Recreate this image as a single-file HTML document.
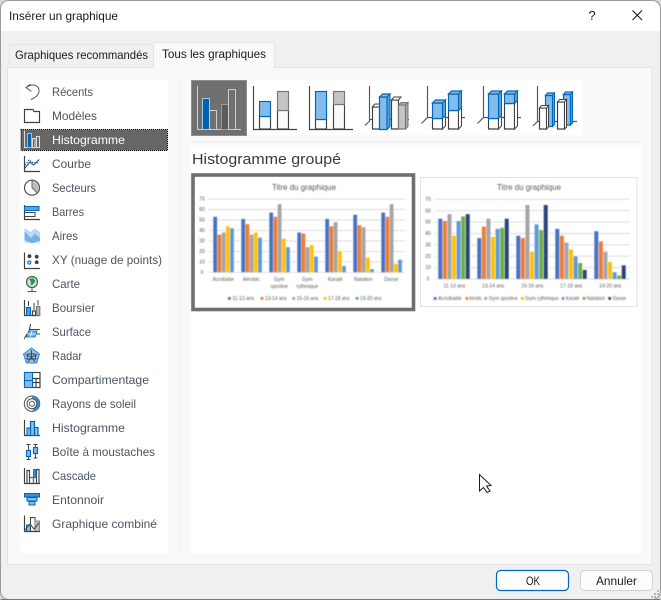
<!DOCTYPE html>
<html lang="fr">
<head>
<meta charset="utf-8">
<title>Insérer un graphique</title>
<style>
html,body{margin:0;padding:0;width:661px;height:600px;overflow:hidden;background:#d9d9d9}
svg{display:block;position:absolute;left:0;top:0}
text{font-family:"Liberation Sans",sans-serif}
.s{font-size:12px;fill:#4c5560}
.d{fill:none;stroke:#404040;stroke-width:1.15}
.b{fill:#83bcea;stroke:#0067b8;stroke-width:1.15}
.w{fill:#fafafa;stroke:#404040;stroke-width:1.15}
.g{fill:#c4c4c0;stroke:#777;stroke-width:1.15}
.t{fill:#eef6fc;stroke:#0067b8;stroke-width:1}
.wt{fill:#fff;stroke:#404040;stroke-width:1}
.c1{fill:#4472c4}.c2{fill:#ed7d31}.c3{fill:#a5a5a5}.c4{fill:#ffc000}.c5{fill:#5b9bd5}.c6{fill:#70ad47}.c7{fill:#264478}
.ax{font-size:5px;fill:#595959}
.lg{font-size:5px;fill:#595959}
.ti{font-size:8px;fill:#595959}
.gl{stroke:#d9d9d9;stroke-width:.9}
</style>
</head>
<body>
<svg width="661" height="600" viewBox="0 0 661 600" xmlns="http://www.w3.org/2000/svg">
<defs><filter id="bl" x="-2%" y="-2%" width="104%" height="104%"><feGaussianBlur stdDeviation="0.4"/></filter></defs>

<!-- window -->
<rect x="0.5" y="0.5" width="660" height="599" rx="8" fill="#f0f0f0" stroke="#9a9a9a"/>
<path d="M1 31 V9 A8 8 0 0 1 9 1 H652 A8 8 0 0 1 660 9 V31 Z" fill="#fff"/>
<path d="M0.5 599.5 H660.5" stroke="#777"/>
<text x="9" y="20" font-size="12" fill="#1a1a1a" textLength="109" lengthAdjust="spacingAndGlyphs">Insérer un graphique</text>
<text x="592" y="20" font-size="13" fill="#1a1a1a" text-anchor="middle">?</text>
<path d="M632.5 10.5 L642 20 M642 10.5 L632.5 20" stroke="#1a1a1a" stroke-width="1.1" fill="none"/>

<!-- tabs and panel -->
<rect x="7.5" y="67.5" width="644.5" height="497" fill="#f9f9f9" stroke="#e3e3e3"/>
<path d="M153.5 67.5 V42.5 H274.5 V67.5" fill="#f9f9f9" stroke="#e3e3e3"/>
<rect x="154" y="64" width="120" height="5" fill="#f9f9f9"/>
<path d="M9.5 67 V44.5 H153" fill="#f0f0f0" stroke="#e6e6e6"/>
<text x="15" y="59" font-size="12" fill="#1a1a1a" textLength="133" lengthAdjust="spacingAndGlyphs">Graphiques recommandés</text>
<text x="162" y="58" font-size="12" fill="#1a1a1a" textLength="104" lengthAdjust="spacingAndGlyphs">Tous les graphiques</text>

<!-- sidebar -->
<rect x="20" y="80" width="148" height="473" fill="#fff"/>
<path d="M179.5 80 V553" stroke="#efefef"/>
<rect x="21" y="129.5" width="146.5" height="21" fill="#666" stroke="#000" stroke-dasharray="1 1"/>

<text class="s" x="52" y="96" textLength="41" lengthAdjust="spacingAndGlyphs">Récents</text>
<text class="s" x="52" y="120" textLength="45" lengthAdjust="spacingAndGlyphs">Modèles</text>
<text class="s" x="52" y="144" style="fill:#fff" textLength="73" lengthAdjust="spacingAndGlyphs">Histogramme</text>
<text class="s" x="52" y="168" textLength="39" lengthAdjust="spacingAndGlyphs">Courbe</text>
<text class="s" x="52" y="192" textLength="44" lengthAdjust="spacingAndGlyphs">Secteurs</text>
<text class="s" x="52" y="216" textLength="32" lengthAdjust="spacingAndGlyphs">Barres</text>
<text class="s" x="52" y="240" textLength="26" lengthAdjust="spacingAndGlyphs">Aires</text>
<text class="s" x="52" y="264" textLength="110" lengthAdjust="spacingAndGlyphs">XY (nuage de points)</text>
<text class="s" x="52" y="288" textLength="28" lengthAdjust="spacingAndGlyphs">Carte</text>
<text class="s" x="52" y="312" textLength="43" lengthAdjust="spacingAndGlyphs">Boursier</text>
<text class="s" x="52" y="336" textLength="39" lengthAdjust="spacingAndGlyphs">Surface</text>
<text class="s" x="52" y="360" textLength="30" lengthAdjust="spacingAndGlyphs">Radar</text>
<text class="s" x="52" y="384" textLength="97" lengthAdjust="spacingAndGlyphs">Compartimentage</text>
<text class="s" x="52" y="408" textLength="84" lengthAdjust="spacingAndGlyphs">Rayons de soleil</text>
<text class="s" x="52" y="432" textLength="73" lengthAdjust="spacingAndGlyphs">Histogramme</text>
<text class="s" x="52" y="456" textLength="103" lengthAdjust="spacingAndGlyphs">Boîte à moustaches</text>
<text class="s" x="52" y="480" textLength="44" lengthAdjust="spacingAndGlyphs">Cascade</text>
<text class="s" x="52" y="504" textLength="52" lengthAdjust="spacingAndGlyphs">Entonnoir</text>
<text class="s" x="52" y="528" textLength="105" lengthAdjust="spacingAndGlyphs">Graphique combiné</text>

<!-- sidebar icons -->
<path d="M26 87.5 C33 83 39 85 39 91 C39 95 35 98 31 99.5 M30.5 84 L26 87.5 L31.5 91.5" fill="none" stroke="#555" stroke-width="1"/>
<path d="M24.5 122.5 V109.5 H33 L34 111.5 H39.5 V122.5 Z" class="d"/>
<path d="M24.5 130.5 V147.5 H40 M32.5 147 V138.5 H35 V147 M36.5 147 V136.5 H39.5 V147" fill="none" stroke="#ddd"/>
<rect x="27.5" y="133.5" width="4" height="14" fill="#0067b8" stroke="#8fc0ea"/>
<path d="M24.5 156 V171.5 H40" class="d"/>
<path d="M25 168 L30 162 L33.5 165 L39.3 159.5" fill="none" stroke="#0067b8" stroke-width="1.2"/>
<path d="M25 165 L29 160 L33 162.5 L39 163" fill="none" stroke="#404040" stroke-dasharray="1.5 1"/>
<circle cx="32" cy="187.7" r="7.5" fill="#fff" stroke="#505050" stroke-width="1.2"/>
<path d="M32 187.7 V180.2 A7.5 7.5 0 0 1 37.3 193 Z" fill="#bdbdbd" stroke="#505050" stroke-width=".8"/>
<path d="M24.5 205 V219.5 H40" class="d"/>
<rect x="24.5" y="206.5" width="14.5" height="4" fill="#52a5ea" stroke="#0067b8"/>
<rect x="24.5" y="212.5" width="10.5" height="4" fill="#fff" stroke="#404040"/>
<path d="M24.5 228 L30.5 232 L35 228.5 L40 232 V243 H24.5 Z" fill="#bcd8f0"/>
<path d="M24.5 231.5 L31 238 L35 234 L40 238 V243 H24.5 Z" fill="#6fb2ea"/>
<path d="M24.5 240 L31 243 H24.5 Z M33 243 L40 240.5 V243 Z" fill="#c8e0f4"/>
<path d="M24.5 252.5 V268.5 H40" class="d"/>
<circle cx="29.5" cy="256.2" r="1.9" fill="#404040"/>
<circle cx="36.7" cy="256.7" r="1.9" fill="#404040"/>
<circle cx="29.3" cy="262.5" r="1.6" fill="#cfe6f8" stroke="#0067b8"/>
<circle cx="36.7" cy="262.3" r="1.9" fill="#404040"/>
<circle cx="32" cy="282" r="5.5" fill="#cfe6d5" stroke="#555" stroke-width="1.2"/>
<path d="M29 279 L33 278 L35.5 281 L33 284.5 L30.5 285 L31 282 Z" fill="#1f9a4d"/>
<path d="M32 288 V291.5 M27.5 291.5 H36.5" stroke="#555" stroke-width="1" fill="none"/>
<path d="M24.5 300 V315.5 H40" class="d"/>
<rect x="26.5" y="307.5" width="4" height="8" class="b" style="fill:#4ba0e6"/>
<rect x="32.5" y="311" width="3" height="4.5" class="w"/>
<rect x="36.5" y="306.5" width="3.3" height="9" class="g" style="fill:#b5b5b5"/>
<path d="M28.5 301 V306 M34 303 V310 M38 300 V305" stroke="#404040" fill="none"/>
<path d="M30.5 324 L29 332 M24 339 L27 334 M30 329.5 H40 M28.5 334 H40" stroke="#404040" fill="none"/>
<path d="M28.5 331 H37 L35 337 H26.5 Z" fill="#6fb2ea" stroke="#0067b8" stroke-width=".8"/>
<path d="M32 331 L30.5 337 M27.5 334 H36" stroke="#fff" stroke-width=".7" fill="none"/>
<path d="M31.5 348 L39.5 354 L36.5 363 H26.5 L23.5 354 Z" fill="#8fc4ee" stroke="#2a85d0"/>
<path d="M31.5 350 V359 M25.5 354.5 L31.5 357 L37.5 354.5 M28 362 L31.5 357 L35 362 M28 354 H35 L36 359 H27 Z" fill="none" stroke="#404040" stroke-width=".9"/>
<rect x="24.5" y="372.5" width="15.5" height="15" class="d"/>
<path d="M32.5 378.5 H40 M36 378.5 V388 M32.5 382.5 H40" class="d"/>
<rect x="24.5" y="372.5" width="8" height="15" fill="#83bcea" stroke="#0067b8"/>
<path d="M24.5 380.5 H32.5" stroke="#0067b8"/>
<circle cx="32" cy="403.7" r="7.7" fill="#fff" stroke="#505050"/>
<path d="M32 396 A7.7 7.7 0 0 1 33 411.3 L32.5 408.5 A5 5 0 0 0 32 398.7 Z" fill="#3390e0"/>
<circle cx="32" cy="403.7" r="5" fill="none" stroke="#505050"/>
<circle cx="32" cy="403.7" r="2.5" fill="none" stroke="#505050"/>
<path d="M24.5 420 V435.5 H40" class="d"/>
<rect x="27" y="428" width="3.5" height="7.5" class="b"/>
<rect x="30.5" y="421.5" width="4" height="14" class="b"/>
<rect x="34.5" y="427.5" width="3.5" height="8" class="b"/>
<rect x="26.5" y="450.5" width="4" height="6" class="b"/>
<rect x="33.5" y="447.5" width="4" height="6" class="b"/>
<path d="M28.5 444.5 V450 M28.5 457 V459.5 M26.5 444.5 H30.5 M26.5 459.5 H30.5 M35.5 444.5 V447 M35.5 454 V458 M33.5 444.5 H37.5 M33.5 458 H37.5" stroke="#404040" stroke-width=".9" fill="none"/>
<path d="M24.5 468 V483.5 H40 M27 483 V470.5 H29.5 V483 M36.5 483 V469.5 H39 V483" class="d"/>
<path d="M30 477.5 H33.5 V483" fill="none" stroke="#777" stroke-width="1.5"/>
<rect x="33.5" y="469.5" width="2.6" height="8" fill="#3390e0" stroke="#0067b8" stroke-width=".8"/>
<rect x="24.5" y="493.5" width="15" height="3.5" fill="#3390e0" stroke="#0067b8"/>
<rect x="27" y="497.5" width="10" height="3.5" fill="#83bcea" stroke="#0067b8"/>
<rect x="29" y="501.5" width="6" height="3.5" fill="#83bcea" stroke="#0067b8"/>
<rect x="26.5" y="525" width="4" height="6.5" fill="#83bcea" stroke="#0067b8"/>
<rect x="30.5" y="517.5" width="4.5" height="14" fill="#fafafa" stroke="#404040"/>
<rect x="35" y="521" width="4.5" height="10.5" fill="#bdbdbd" stroke="#888"/>
<path d="M24.5 515.5 V531.5 H40" class="d"/>
<path d="M25 530 L30 524 L34 529 L39 523" fill="none" stroke="#505050" stroke-width="1.1"/>

<!-- main white area -->
<rect x="191" y="80" width="392" height="55" fill="#fff"/>
<path d="M192 141.5 H640" stroke="#efefef"/>
<rect x="191" y="145" width="450" height="408" fill="#fff"/>
<text x="192" y="164" font-size="14.7" fill="#3a3a3a" textLength="149" lengthAdjust="spacingAndGlyphs">Histogramme groupé</text>

<!-- gallery 1 selected -->
<rect x="191.5" y="80.5" width="55" height="55" fill="#707070" stroke="#8e8e8e"/>
<path d="M197.5 86 V129.5 H241" fill="none" stroke="#cfcfcf"/>
<rect x="202.5" y="98.5" width="7" height="31" fill="#0063b1" stroke="#a8cbea"/>
<rect x="209.5" y="110.5" width="7" height="19" fill="none" stroke="#cfcfcf"/>
<rect x="221.5" y="104.5" width="7" height="25" fill="#5c5c5c" stroke="#9a9a9a"/>
<rect x="228.5" y="89.5" width="7" height="40" fill="none" stroke="#cfcfcf"/>

<!-- gallery 2 stacked -->
<rect x="259.5" y="116.5" width="11" height="12.5" class="w"/>
<rect x="259.5" y="101.5" width="11" height="15" class="b"/>
<rect x="277.5" y="110.5" width="11" height="18.5" class="w"/>
<rect x="277.5" y="91.5" width="11" height="19" class="g"/>
<path d="M253.5 86 V129.5 H297" class="d"/>

<!-- gallery 3 100% -->
<rect x="315.5" y="119.5" width="11" height="9.5" class="w"/>
<rect x="315.5" y="91.5" width="11" height="28" class="b"/>
<rect x="333.5" y="104.5" width="11" height="24.5" class="w"/>
<rect x="333.5" y="91.5" width="11" height="13" class="g"/>
<path d="M309.5 86 V129.5 H353" class="d"/>

<!-- gallery 4 3D grouped -->
<path d="M369.5 86 V121 L365 125.5 M369.5 119.5 H409" class="d" style="stroke:#555"/>
<path d="M372.5 107 V129 H379.5 V107 Z" class="w"/>
<path d="M372.5 107 L375 104 H382 L379.5 107 Z" class="wt"/>
<path d="M379.5 97 H387 V129.5 H379.5 Z" class="b"/>
<path d="M379.5 97 L382.5 94 H390 L387 97 Z" class="b"/>
<path d="M387 97 L390 94 V126.5 L387 129.5 Z" fill="#4ba0e6" stroke="#0067b8" stroke-width="1"/>
<path d="M391.5 100 V129 H398.5 V100 Z" class="w"/>
<path d="M391.5 100 L394 97 H401 L398.5 100 Z" class="wt"/>
<path d="M398.5 105 H405.5 V129 H398.5 Z" class="g"/>
<path d="M398.5 105 L401 102.5 H408 L405.5 105 Z M405.5 105 L408 102.5 V126.5 L405.5 129 Z" fill="#aaa" stroke="#777" stroke-width="1"/>

<!-- gallery 5 3D stacked -->
<path d="M427.5 86 V117.5 L421.5 123.5 M427.5 117.5 H465" class="d" style="stroke:#555"/>
<path d="M432.5 118.5 H442.5 V129 H432.5 Z" class="w"/>
<path d="M442.5 118.5 L445.5 115.5 V126 L442.5 129 Z" class="wt"/>
<path d="M432.5 103 H442.5 V118.5 H432.5 Z" class="b"/>
<path d="M432.5 103 L435.5 100 H445.5 L442.5 103 Z" class="b"/>
<path d="M442.5 103 L445.5 100 V115.5 L442.5 118.5 Z" fill="#4ba0e6" stroke="#0067b8" stroke-width="1"/>
<path d="M448.5 110.5 H458.5 V129 H448.5 Z" class="w"/>
<path d="M458.5 110.5 L461.5 107.5 V126 L458.5 129 Z" class="wt"/>
<path d="M448.5 94 H458.5 V110.5 H448.5 Z" class="b"/>
<path d="M448.5 94 L451.5 91 H461.5 L458.5 94 Z" class="b"/>
<path d="M458.5 94 L461.5 91 V107.5 L458.5 110.5 Z" fill="#4ba0e6" stroke="#0067b8" stroke-width="1"/>

<!-- gallery 6 3D 100% -->
<path d="M483.5 86 V117.5 L477.5 123.5 M483.5 117.5 H521" class="d" style="stroke:#555"/>
<path d="M488.5 118.5 H498.5 V129 H488.5 Z" class="w"/>
<path d="M498.5 118.5 L501.5 115.5 V126 L498.5 129 Z" class="wt"/>
<path d="M488.5 94 H498.5 V118.5 H488.5 Z" class="b"/>
<path d="M488.5 94 L491.5 91 H501.5 L498.5 94 Z" class="b"/>
<path d="M498.5 94 L501.5 91 V115.5 L498.5 118.5 Z" fill="#4ba0e6" stroke="#0067b8" stroke-width="1"/>
<path d="M504.5 103.5 H514.5 V129 H504.5 Z" class="w"/>
<path d="M514.5 103.5 L517.5 100.5 V126 L514.5 129 Z" class="wt"/>
<path d="M504.5 94 H514.5 V103.5 H504.5 Z" class="b"/>
<path d="M504.5 94 L507.5 91 H517.5 L514.5 94 Z" class="b"/>
<path d="M514.5 94 L517.5 91 V100.5 L514.5 103.5 Z" fill="#4ba0e6" stroke="#0067b8" stroke-width="1"/>

<!-- gallery 7 3D columns -->
<path d="M537.5 86 V121.5 L533 126 M537.5 121.5 H577" class="d" style="stroke:#555"/>
<path d="M545.5 95.5 H552.5 V126.5 H545.5 Z" class="b"/>
<path d="M545.5 95.5 L547.5 93 H554.5 L552.5 95.5 Z" class="b"/>
<path d="M552.5 95.5 L554.5 93 V124.5 L552.5 126.5 Z" fill="#4ba0e6" stroke="#0067b8" stroke-width="1"/>
<path d="M563.5 94.5 H570.5 V125 H563.5 Z" class="b"/>
<path d="M563.5 94.5 L565.5 92 H572.5 L570.5 94.5 Z" class="b"/>
<path d="M570.5 94.5 L572.5 92 V123 L570.5 125 Z" fill="#4ba0e6" stroke="#0067b8" stroke-width="1"/>
<path d="M539.5 108 H546.5 V129 H539.5 Z" class="w" style="fill:#fff"/>
<path d="M539.5 108 L541.5 105.5 H548.5 L546.5 108 Z M546.5 108 L548.5 105.5 V127 L546.5 129 Z" class="wt"/>
<path d="M557.5 102 H564.5 V129 H557.5 Z" class="w" style="fill:#fff"/>
<path d="M557.5 102 L559.5 99.5 H566.5 L564.5 102 Z M564.5 102 L566.5 99.5 V127 L564.5 129 Z" class="wt"/>

<!-- chart 1 -->
<rect x="193" y="175" width="220.5" height="134.5" fill="#fff" stroke="#6f6f6f" stroke-width="3.6"/>
<g filter="url(#bl)">
<text class="ti" x="304" y="190" text-anchor="middle" textLength="64" lengthAdjust="spacingAndGlyphs">Titre du graphique</text>
<path class="gl" d="M208.7 199H404.7M208.7 209.5H404.7M208.7 220H404.7M208.7 230.4H404.7M208.7 240.9H404.7M208.7 251.4H404.7M208.7 261.8H404.7M208.7 272.3H404.7"/>
<g class="ax" text-anchor="middle">
<text x="202" y="200.6">70</text><text x="202" y="211.1">60</text><text x="202" y="221.6">50</text><text x="202" y="232">40</text><text x="202" y="242.5">30</text><text x="202" y="253">20</text><text x="202" y="263.4">10</text><text x="202" y="273.9">0</text>
<text x="223.3" y="281">Acrobatie</text><text x="251.3" y="281">Aérobic</text><text x="279.3" y="281">Gym</text><text x="279.3" y="288">sportive</text><text x="307.3" y="281">Gym</text><text x="307.3" y="288">rythmique</text><text x="335.3" y="281">Karaté</text><text x="363.3" y="281">Natation</text><text x="391.3" y="281">Danse</text>
</g>
<g transform="translate(213.3,272.3) scale(1,-1.047)">
<rect class="c1" x="0" width="3.8" height="53"/><rect class="c2" x="4.2" width="3.8" height="36"/><rect class="c3" x="8.4" width="3.8" height="38"/><rect class="c4" x="12.6" width="3.8" height="44"/><rect class="c5" x="16.8" width="3.8" height="42"/>
<rect class="c1" x="28" width="3.8" height="51"/><rect class="c2" x="32.2" width="3.8" height="46"/><rect class="c3" x="36.4" width="3.8" height="36"/><rect class="c4" x="40.6" width="3.8" height="38"/><rect class="c5" x="44.8" width="3.8" height="33"/>
<rect class="c1" x="56" width="3.8" height="57"/><rect class="c2" x="60.2" width="3.8" height="53"/><rect class="c3" x="64.4" width="3.8" height="65"/><rect class="c4" x="68.6" width="3.8" height="32"/><rect class="c5" x="72.8" width="3.8" height="24"/>
<rect class="c1" x="84" width="3.8" height="38"/><rect class="c2" x="88.2" width="3.8" height="37"/><rect class="c3" x="92.4" width="3.8" height="24"/><rect class="c4" x="96.6" width="3.8" height="26"/><rect class="c5" x="100.8" width="3.8" height="15"/>
<rect class="c1" x="112" width="3.8" height="51"/><rect class="c2" x="116.2" width="3.8" height="44"/><rect class="c3" x="120.4" width="3.8" height="48"/><rect class="c4" x="124.6" width="3.8" height="20"/><rect class="c5" x="128.8" width="3.8" height="6"/>
<rect class="c1" x="140" width="3.8" height="55"/><rect class="c2" x="144.2" width="3.8" height="45"/><rect class="c3" x="148.4" width="3.8" height="43"/><rect class="c4" x="152.6" width="3.8" height="14"/><rect class="c5" x="156.8" width="3.8" height="3"/>
<rect class="c1" x="168" width="3.8" height="57"/><rect class="c2" x="172.2" width="3.8" height="53"/><rect class="c3" x="176.4" width="3.8" height="65"/><rect class="c4" x="180.6" width="3.8" height="8"/><rect class="c5" x="184.8" width="3.8" height="12"/>
</g>
<rect class="c1" x="228" y="297" width="2.8" height="2.8"/><text class="lg" x="232.3" y="300" textLength="21.7" lengthAdjust="spacingAndGlyphs">11-13 ans</text>
<rect class="c2" x="260.7" y="297" width="2.8" height="2.8"/><text class="lg" x="265" y="300" textLength="21.7" lengthAdjust="spacingAndGlyphs">13-14 ans</text>
<rect class="c3" x="292.3" y="297" width="2.8" height="2.8"/><text class="lg" x="296.6" y="300" textLength="21.7" lengthAdjust="spacingAndGlyphs">15-16 ans</text>
<rect class="c4" x="323.7" y="297" width="2.8" height="2.8"/><text class="lg" x="328" y="300" textLength="21.7" lengthAdjust="spacingAndGlyphs">17-18 ans</text>
<rect class="c5" x="355.7" y="297" width="2.8" height="2.8"/><text class="lg" x="360" y="300" textLength="21.7" lengthAdjust="spacingAndGlyphs">19-20 ans</text>
</g>

<!-- chart 2 -->
<rect x="420.5" y="177.5" width="216.5" height="129" fill="#fff" stroke="#e2e2e2"/>
<g filter="url(#bl)">
<text class="ti" x="529" y="190" text-anchor="middle" textLength="64" lengthAdjust="spacingAndGlyphs">Titre du graphique</text>
<path class="gl" d="M435 199.3H630M435 210.7H630M435 222.1H630M435 233.5H630M435 244.8H630M435 256.2H630M435 267.6H630M435 279H630"/>
<g class="ax" text-anchor="middle">
<text x="428" y="200.9">70</text><text x="428" y="212.3">60</text><text x="428" y="223.7">50</text><text x="428" y="235.1">40</text><text x="428" y="246.4">30</text><text x="428" y="257.8">20</text><text x="428" y="269.2">10</text><text x="428" y="280.6">0</text>
<text x="454.3" y="287.6">11-13 ans</text><text x="493.3" y="287.6">13-14 ans</text><text x="532.3" y="287.6">15-16 ans</text><text x="571.3" y="287.6">17-18 ans</text><text x="610.3" y="287.6">19-20 ans</text>
</g>
<g transform="translate(438.3,279) scale(1,-1.138)">
<rect class="c1" x="0" width="4" height="53"/><rect class="c2" x="4.57" width="4" height="51"/><rect class="c3" x="9.14" width="4" height="57"/><rect class="c4" x="13.71" width="4" height="38"/><rect class="c5" x="18.28" width="4" height="51"/><rect class="c6" x="22.85" width="4" height="55"/><rect class="c7" x="27.42" width="4" height="57"/>
<rect class="c1" x="39" width="4" height="36"/><rect class="c2" x="43.57" width="4" height="46"/><rect class="c3" x="48.14" width="4" height="53"/><rect class="c4" x="52.71" width="4" height="37"/><rect class="c5" x="57.28" width="4" height="44"/><rect class="c6" x="61.85" width="4" height="45"/><rect class="c7" x="66.42" width="4" height="53"/>
<rect class="c1" x="78" width="4" height="38"/><rect class="c2" x="82.57" width="4" height="36"/><rect class="c3" x="87.14" width="4" height="65"/><rect class="c4" x="91.71" width="4" height="24"/><rect class="c5" x="96.28" width="4" height="48"/><rect class="c6" x="100.85" width="4" height="43"/><rect class="c7" x="105.42" width="4" height="65"/>
<rect class="c1" x="117" width="4" height="44"/><rect class="c2" x="121.57" width="4" height="38"/><rect class="c3" x="126.14" width="4" height="32"/><rect class="c4" x="130.71" width="4" height="26"/><rect class="c5" x="135.28" width="4" height="20"/><rect class="c6" x="139.85" width="4" height="14"/><rect class="c7" x="144.42" width="4" height="8"/>
<rect class="c1" x="156" width="4" height="42"/><rect class="c2" x="160.57" width="4" height="33"/><rect class="c3" x="165.14" width="4" height="24"/><rect class="c4" x="169.71" width="4" height="15"/><rect class="c5" x="174.28" width="4" height="6"/><rect class="c6" x="178.85" width="4" height="3"/><rect class="c7" x="183.42" width="4" height="12"/>
</g>
<rect class="c1" x="433.7" y="297" width="2.8" height="2.8"/><text class="lg" x="438" y="300" textLength="23.7" lengthAdjust="spacingAndGlyphs">Acrobatie</text>
<rect class="c2" x="465.5" y="297" width="2.8" height="2.8"/><text class="lg" x="469.3" y="300" textLength="12.5" lengthAdjust="spacingAndGlyphs">Aérobic</text>
<rect class="c3" x="484.3" y="297" width="2.8" height="2.8"/><text class="lg" x="488.7" y="300" textLength="29" lengthAdjust="spacingAndGlyphs">Gym sportive</text>
<rect class="c4" x="521" y="297" width="2.8" height="2.8"/><text class="lg" x="525.3" y="300" textLength="33.4" lengthAdjust="spacingAndGlyphs">Gym rythmique</text>
<rect class="c5" x="561.7" y="297" width="2.8" height="2.8"/><text class="lg" x="566" y="300" textLength="13.3" lengthAdjust="spacingAndGlyphs">Karaté</text>
<rect class="c6" x="582.7" y="297" width="2.8" height="2.8"/><text class="lg" x="586.7" y="300" textLength="18.3" lengthAdjust="spacingAndGlyphs">Natation</text>
<rect class="c7" x="608.3" y="297" width="2.8" height="2.8"/><text class="lg" x="612.7" y="300" textLength="13.3" lengthAdjust="spacingAndGlyphs">Danse</text>
</g>

<!-- cursor -->
<path d="M479.5 474.5 V491 L483.5 487.5 L487 492.5 L490 491 L486.5 486 L491 485.5 Z" fill="#fff" stroke="#1a1a2a" stroke-width="1"/>

<!-- buttons -->
<rect x="496.5" y="570.5" width="72" height="20" rx="4" fill="#fdfdfd" stroke="#0067c0" stroke-width="1.2"/>
<text x="533" y="585" font-size="12" fill="#1a1a1a" text-anchor="middle" textLength="14" lengthAdjust="spacingAndGlyphs">OK</text>
<rect x="580.5" y="570.5" width="72" height="20" rx="4" fill="#fdfdfd" stroke="#d2d2d2"/>
<text x="596" y="585" font-size="12" fill="#1a1a1a" textLength="41" lengthAdjust="spacingAndGlyphs">Annuler</text>

<!-- resize grip -->
<g fill="#b5b5b5">
<rect x="657" y="590" width="2" height="2"/><rect x="654" y="593" width="2" height="2"/><rect x="657" y="593" width="2" height="2"/><rect x="651" y="596" width="2" height="2"/><rect x="654" y="596" width="2" height="2"/><rect x="657" y="596" width="2" height="2"/>
</g>
</svg>
</body>
</html>
